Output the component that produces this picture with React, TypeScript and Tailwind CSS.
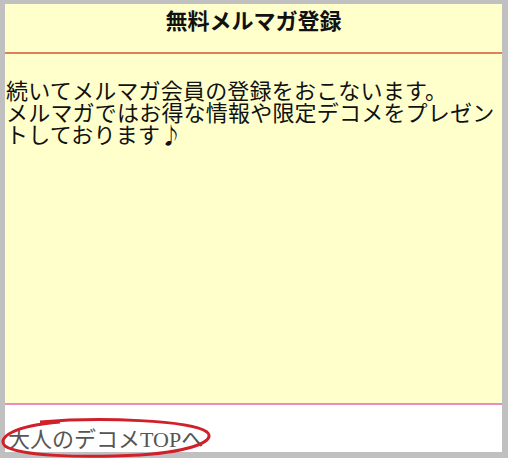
import React from 'react';

// メルマガ登録ページ（フィーチャーフォン風）
export default function App() {
  return (
    <div className="w-[508px] h-[458px] bg-[#c0c0c0] pl-[5px] pt-[4px] pr-[6px] pb-[6px] overflow-hidden">
      <div className="h-full flex flex-col bg-white relative">
        {/* タイトル */}
        <div className="h-[50px] shrink-0 bg-[#ffffcc] border-b-2 border-[#e0805a] flex justify-center">
          <h1 className="text-[22px] leading-[30px] font-bold text-[#111]" style={{ fontFamily: '"Noto Sans CJK JP", sans-serif' }}>
            無料メルマガ登録
          </h1>
        </div>

        {/* 本文 */}
        <div className="flex-1 bg-[#ffffcc] border-b-2 border-[#e88cc4] pt-[24px] pl-px">
          <p className="text-[22px] leading-[22px] text-[#111] tracking-[0.2px]" style={{ fontFamily: '"Noto Sans CJK JP", sans-serif' }}>
            続いてメルマガ会員の登録をおこないます。
            <br />
            メルマガではお得な情報や限定デコメをプレゼントしております♪
          </p>
        </div>

        {/* リンク */}
        <div className="h-[47px] shrink-0 bg-white flex items-end pl-[3px]">
          <a className="text-[22px] leading-[24px] text-[#555] cursor-pointer" style={{ fontFamily: '"Liberation Serif", "Noto Sans CJK JP", serif' }}>
            大人のデコメTOPへ
          </a>
        </div>

        {/* 赤丸の注釈 */}
        <svg className="absolute left-[-5px] bottom-[-6px] w-[215px] h-[40px] pointer-events-none" viewBox="0 0 215 40">
          <path
            d="M40 4 C 100 -1, 190 2, 207 14 C 216 22, 196 33, 140 37 C 80 40, 20 38, 5 28 C -3 20, 12 8, 60 4"
            fill="none"
            stroke="#d0202a"
            strokeWidth="3"
          />
        </svg>
      </div>
    </div>
  );
}
